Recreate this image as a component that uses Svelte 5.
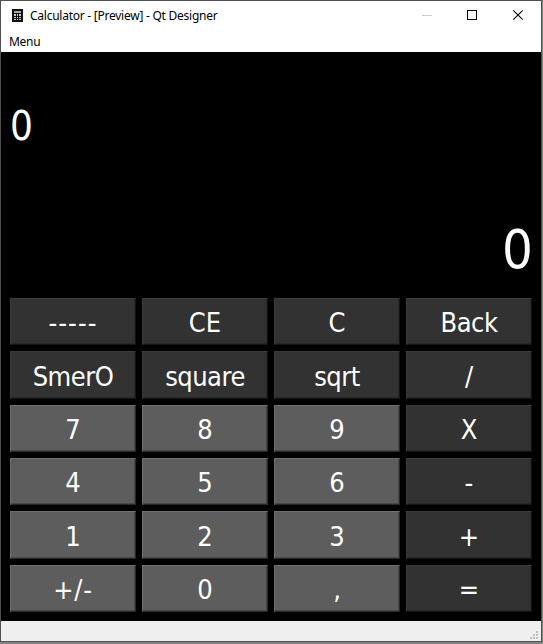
<script>
  const keys = [
    ['-----', 'CE', 'C', 'Back'],
    ['SmerO', 'square', 'sqrt', '/'],
    ['7', '8', '9', 'X'],
    ['4', '5', '6', '-'],
    ['1', '2', '3', '+'],
    ['+/-', '0', ',', '='],
  ];
  const isLight = (row, col) => row > 1 && col < 3;
</script>

<div class="desktop">
  <div class="window">
    <header class="titlebar">
      <svg class="logo" width="11" height="13" viewBox="0 0 11 13" shape-rendering="crispEdges">
        <rect width="11" height="13" rx="1" fill="#111" />
        <rect x="2" y="2" width="7" height="2" fill="#aaa" />
        <path d="M2 5h2v2H2zM5 5h1v2H5zM7 5h2v2H7zM2 8h2v1H2zM5 8h1v1H5zM7 8h2v1H7zM2 10h2v1H2zM5 10h1v1H5zM7 10h2v1H7z" fill="#ccc" />
      </svg>
      <span class="title">Calculator - [Preview] - Qt Designer</span>
      <svg class="controls" width="138" height="29" viewBox="0 0 138 29">
        <path d="M19 14.5h10" stroke="#ccc" fill="none" />
        <rect x="64.5" y="9.5" width="9" height="9" stroke="#000" fill="none" />
        <path d="M110.3 9.3l9.4 9.4M119.7 9.3l-9.4 9.4" stroke="#000" stroke-width="1.1" fill="none" />
      </svg>
    </header>
    <nav class="menubar"><span>Menu</span></nav>
    <main>
      <div class="history">0</div>
      <div class="display">0</div>
      <div class="keypad">
        {#each keys as row, r}
          {#each row as label, c}
            <button class:light={isLight(r, c)}><span class="label" class:word={label.length > 3} class:dashes={label === '-----'} class:sign={label === '+/-'}>{label}</span></button>
          {/each}
        {/each}
      </div>
    </main>
    <footer>
      <svg width="8" height="8" viewBox="0 0 8 8" shape-rendering="crispEdges">
        <path d="M6 0h2v2H6zM3 3h2v2H3zM6 3h2v2H6zM0 6h2v2H0zM3 6h2v2H3zM6 6h2v2H6z" fill="#bfbfbf" />
      </svg>
    </footer>
  </div>
</div>

<style>
  .desktop {
    width: 543px;
    height: 644px;
    box-sizing: border-box;
    padding: 0 1px 2px 0;
    background: #838383;
    overflow: hidden;
  }
  .window {
    height: 642px;
    box-sizing: border-box;
    border: 1px solid #505050;
    background: #fff;
    display: flex;
    flex-direction: column;
    font-family: "Noto Sans", "Open Sans", sans-serif;
  }
  .titlebar {
    height: 30px;
    display: flex;
    align-items: flex-start;
  }
  .logo {
    margin: 8px 0 0 11px;
  }
  .title {
    margin-left: 7px;
    font-size: 12px;
    line-height: 29px;
    letter-spacing: -0.25px;
    white-space: nowrap;
  }
  .controls {
    margin-left: auto;
  }
  .menubar {
    height: 21px;
    padding-left: 8px;
    font-size: 12px;
    line-height: 21px;
    letter-spacing: -0.3px;
  }
  main {
    height: 569px;
    box-sizing: border-box;
    padding: 0 9px 9px;
    background: #000;
    color: #fff;
    font-family: "DejaVu Sans Condensed", "DejaVu Sans", sans-serif;
    font-stretch: condensed;
    display: flex;
    flex-direction: column;
  }
  .history {
    height: 147px;
    font-size: 40px;
    line-height: 149px;
  }
  .display {
    height: 99px;
    margin-right: -1px;
    font-size: 54px;
    line-height: 101px;
    text-align: right;
  }
  .keypad {
    display: grid;
    grid-template-columns: repeat(4, 126px);
    grid-template-rows: 47px 48px 47px 47px 48px 47px;
    gap: 6px;
  }
  button {
    padding: 2px 0 0;
    border: 1px solid;
    border-color: #3b3b3b #151515 #151515 #3b3b3b;
    box-shadow: inset -1px -1px #282828;
    border-radius: 0;
    background: #323232;
    color: #fff;
    font: inherit;
    font-size: 27px;
    line-height: 43px;
    display: flex;
    align-items: center;
    justify-content: center;
  }
  button.light {
    background: #5d5d5d;
    border-color: #707070 #292929 #292929 #707070;
    box-shadow: inset -1px -1px #484848;
  }
  .word {
    letter-spacing: -0.5px;
  }
  .dashes {
    letter-spacing: 1px;
  }
  .sign {
    letter-spacing: 0.8px;
  }
  footer {
    height: 20px;
    box-sizing: border-box;
    padding: 0 3px 2px 0;
    background: #efefef;
    display: flex;
    align-items: flex-end;
    justify-content: flex-end;
  }
</style>
